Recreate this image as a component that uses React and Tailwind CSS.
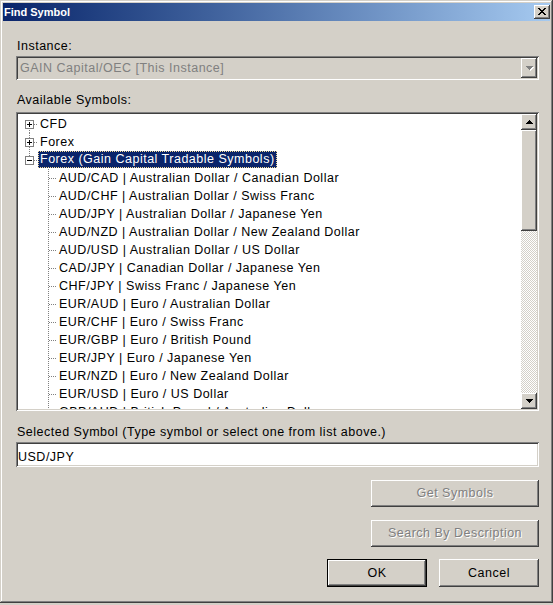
import React from "react";

const RAISED =
  "shadow-[inset_-1px_-1px_#404040,inset_1px_1px_#ffffff,inset_-2px_-2px_#808080,inset_2px_2px_#d4d0c8]";
const SUNKEN =
  "shadow-[inset_1px_1px_#808080,inset_-1px_-1px_#ffffff,inset_2px_2px_#404040,inset_-2px_-2px_#d4d0c8]";

const pairs = [
  ["AUD/CAD", "Australian Dollar / Canadian Dollar"],
  ["AUD/CHF", "Australian Dollar / Swiss Franc"],
  ["AUD/JPY", "Australian Dollar / Japanese Yen"],
  ["AUD/NZD", "Australian Dollar / New Zealand Dollar"],
  ["AUD/USD", "Australian Dollar / US Dollar"],
  ["CAD/JPY", "Canadian Dollar / Japanese Yen"],
  ["CHF/JPY", "Swiss Franc / Japanese Yen"],
  ["EUR/AUD", "Euro / Australian Dollar"],
  ["EUR/CHF", "Euro / Swiss Franc"],
  ["EUR/GBP", "Euro / British Pound"],
  ["EUR/JPY", "Euro / Japanese Yen"],
  ["EUR/NZD", "Euro / New Zealand Dollar"],
  ["EUR/USD", "Euro / US Dollar"],
  ["GBP/AUD", "British Pound / Australian Dollar"],
];

function CloseGlyph() {
  const cells = [];
  for (let i = 0; i < 7; i++) {
    cells.push(<rect key={"a" + i} x={4 + i} y={3 + i} width="2" height="1" fill="#000" />);
    cells.push(<rect key={"b" + i} x={10 - i} y={3 + i} width="2" height="1" fill="#000" />);
  }
  return (
    <svg width="16" height="14" viewBox="0 0 16 14" shapeRendering="crispEdges">
      {cells}
    </svg>
  );
}

function Arrow({ up = false, color = "#000", shadow = false }) {
  const rows = [0, 1, 2, 3].map((r) => (up ? r : 3 - r));
  const tri = (dx, dy, fill) =>
    rows.map((w, i) => (
      <rect key={fill + i} x={4 - w + dx} y={i + dy} width={w * 2 + 1} height="1" fill={fill} />
    ));
  return (
    <svg width="9" height="5" viewBox="0 0 9 5" shapeRendering="crispEdges">
      {shadow && tri(1, 1, "#ffffff")}
      {tri(0, 0, color)}
    </svg>
  );
}

// Expand / collapse box with the dotted connectors of a root node
function RootConnector({ expanded, first, last }) {
  return (
    <svg width="20" height="18" viewBox="0 0 20 18" shapeRendering="crispEdges" className="shrink-0">
      <line
        x1="11.5"
        x2="11.5"
        y1={first ? 9 : 0}
        y2={last ? 9 : 18}
        stroke="#808080"
        strokeDasharray="1 1"
      />
      <line x1="16" x2="20" y1="9.5" y2="9.5" stroke="#808080" strokeDasharray="1 1" />
      <rect x="7.5" y="5.5" width="8" height="8" fill="#fff" stroke="#808080" />
      <line x1="9" x2="14" y1="9.5" y2="9.5" stroke="#000" />
      {!expanded && <line x1="11.5" x2="11.5" y1="7" y2="12" stroke="#000" />}
    </svg>
  );
}

function ChildConnector() {
  return (
    <svg width="39" height="18" viewBox="0 0 39 18" shapeRendering="crispEdges" className="shrink-0">
      <line x1="30.5" x2="30.5" y1="0" y2="18" stroke="#808080" strokeDasharray="1 1" />
      <line x1="31" x2="39" y1="9.5" y2="9.5" stroke="#808080" strokeDasharray="1 1" />
    </svg>
  );
}

function Button({ children, disabled, isDefault, className = "" }) {
  const face = (
    <div
      className={`flex h-full w-full items-center justify-center bg-[#d4d0c8] ${RAISED} ${
        disabled ? "text-[#808080] [text-shadow:1px_1px_0_#ffffff]" : "text-black"
      }`}
    >
      {children}
    </div>
  );
  return (
    <div className={`${className} ${isDefault ? "border border-black" : ""}`}>{face}</div>
  );
}

export default function App() {
  return (
    <div className="h-[605px] w-[553px] bg-[#d4d0c8] font-['Liberation_Sans',Arial,sans-serif] text-[12.5px] tracking-[0.5px] text-black">
      <div className="flex h-[603px] w-[553px] flex-col p-[3px] shadow-[inset_-1px_-1px_#404040,inset_1px_1px_#d4d0c8,inset_-2px_-2px_#808080,inset_2px_2px_#ffffff]">
        {/* caption */}
        <div className="flex h-[18px] shrink-0 items-center justify-between bg-linear-to-r from-[#0a246a] to-[#a6caf0] pl-[1px]">
          <span className="text-[11px] leading-none font-bold tracking-normal text-white">Find Symbol</span>
          <div className={`flex h-[14px] w-[16px] items-center justify-center bg-[#d4d0c8] ${RAISED}`}>
            <CloseGlyph />
          </div>
        </div>

        <div className="flex flex-col pl-[13px]">
          <div className="mt-[17px] h-[16px] pl-[1px] leading-[16px]">Instance:</div>

          {/* instance combo (disabled) */}
          <div className={`mt-[2px] flex h-[24px] w-[523px] items-center bg-[#d4d0c8] p-[2px] ${SUNKEN}`}>
            <div className="flex-1 pl-[2px] leading-[16px] text-[#808080]">GAIN Capital/OEC [This Instance]</div>
            <div className={`flex h-[20px] w-[16px] items-center justify-center ${RAISED}`}>
              <Arrow color="#808080" shadow />
            </div>
          </div>

          <div className="mt-[12px] h-[16px] pl-[1px] leading-[16px]">Available Symbols:</div>

          {/* symbol tree */}
          <div className={`mt-[4px] flex h-[299px] w-[523px] bg-white p-[2px] ${SUNKEN}`}>
            <div className="flex-1 overflow-hidden pt-[1px]">
              {[
                { label: "CFD", first: true },
                { label: "Forex" },
                { label: "Forex (Gain Capital Tradable Symbols)", expanded: true, last: true, selected: true },
              ].map((n) => (
                <div key={n.label} className="flex h-[18px] items-center">
                  <RootConnector expanded={n.expanded} first={n.first} last={n.last} />
                  {n.selected ? (
                    <span className="flex h-[17px] items-center self-start border border-dotted border-[#f5db95] bg-[#0a246a] px-[1px] whitespace-nowrap text-white">
                      {n.label}
                    </span>
                  ) : (
                    <span className="px-[2px] leading-[18px] whitespace-nowrap">{n.label}</span>
                  )}
                </div>
              ))}
              {pairs.map(([code, name]) => (
                <div key={code} className="flex h-[18px] items-center">
                  <ChildConnector />
                  <span className="px-[2px] leading-[18px] whitespace-nowrap">
                    {code} | {name}
                  </span>
                </div>
              ))}
            </div>

            {/* vertical scrollbar */}
            <div className="flex w-[16px] flex-col">
              <div className={`flex h-[16px] items-center justify-center bg-[#d4d0c8] ${RAISED}`}>
                <Arrow up />
              </div>
              <div className={`h-[101px] bg-[#d4d0c8] ${RAISED}`} />
              <div className="flex-1 bg-[#d4d0c8] [background-image:repeating-conic-gradient(#ffffff_0_25%,#d4d0c8_0_50%)] [background-size:2px_2px]" />
              <div className={`flex h-[16px] items-center justify-center bg-[#d4d0c8] ${RAISED}`}>
                <Arrow />
              </div>
            </div>
          </div>

          <div className="mt-[13px] h-[16px] pl-[1px] leading-[16px]">
            Selected Symbol (Type symbol or select one from list above.)
          </div>

          <div className={`mt-[2px] h-[25px] w-[523px] bg-white px-[2px] pt-[7px] ${SUNKEN}`}>
            <div className="leading-[16px]">USD/JPY</div>
          </div>

          <div className="mt-[13px] flex w-[523px] flex-col items-end gap-[13px]">
            <Button disabled className="h-[27px] w-[168px]">Get Symbols</Button>
            <Button disabled className="h-[27px] w-[168px]">Search By Description</Button>
            <div className="-mt-[1px] flex gap-[12px]">
              <Button isDefault className="h-[28px] w-[100px]">OK</Button>
              <Button className="h-[28px] w-[100px]">Cancel</Button>
            </div>
          </div>
        </div>
      </div>
    </div>
  );
}
